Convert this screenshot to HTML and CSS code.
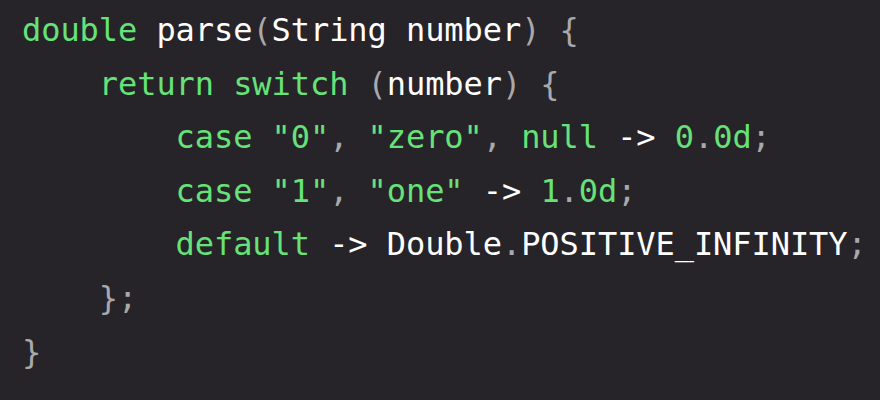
FILE: index.html
```html
<!DOCTYPE html>
<html>
<head>
<meta charset="utf-8">
<link rel="stylesheet" href="styles.css">
</head>
<body>
<pre class="code"><span class="k">double</span> <span class="i">parse</span><span class="p">(</span><span class="i">String number</span><span class="p">)</span> <span class="p">{</span>
    <span class="k">return switch</span> <span class="p">(</span><span class="i">number</span><span class="p">)</span> <span class="p">{</span>
        <span class="k">case</span> <span class="k">"0"</span><span class="p">,</span> <span class="k">"zero"</span><span class="p">,</span> <span class="k">null</span> <span class="i">-&gt;</span> <span class="k">0</span><span class="p">.</span><span class="k">0d</span><span class="p">;</span>
        <span class="k">case</span> <span class="k">"1"</span><span class="p">,</span> <span class="k">"one"</span> <span class="i">-&gt;</span> <span class="k">1</span><span class="p">.</span><span class="k">0d</span><span class="p">;</span>
        <span class="k">default</span> <span class="i">-&gt;</span> <span class="i">Double</span><span class="p">.</span><span class="i">POSITIVE_INFINITY</span><span class="p">;</span>
    <span class="p">};</span>
<span class="p">}</span></pre>
</body>
</html>
```
FILE: styles.css
```css
html, body {
  margin: 0;
  padding: 0;
  background: #262429;
  width: 880px;
  height: 400px;
  overflow: hidden;
}
.code {
  margin: 0;
  padding: 4px 0 0 22px;
  font-family: "DejaVu Sans Mono", monospace;
  font-size: 32px;
  letter-spacing: -0.07px;
  line-height: 53.6px;
  color: #ffffff;
}
.k { color: #66e278; }
.i { color: #ffffff; }
.p { color: #a9a9ab; }
```
